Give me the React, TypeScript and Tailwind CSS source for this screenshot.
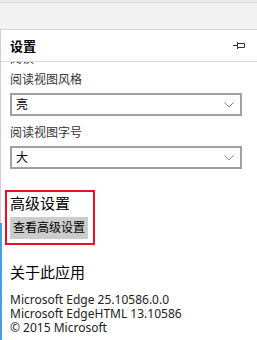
import React from "react";

const font = { fontFamily: '"Noto Sans", "Noto Sans CJK SC", sans-serif' };

function Chevron() {
  return (
    <svg width="10" height="6" viewBox="0 0 10 6" className="text-[#8a8a8a]">
      <path d="M0.5 0.5 L5 5 L9.5 0.5" fill="none" stroke="currentColor" strokeWidth="1" />
    </svg>
  );
}

function PinIcon() {
  return (
    <svg width="13" height="9" viewBox="0 0 13 9" className="text-[#333]">
      <path d="M0 4.5 H4.5 M4.5 1 V8 M4.5 2.5 H11.5 V6.5 H4.5" fill="none" stroke="currentColor" strokeWidth="1" />
    </svg>
  );
}

function Select({ value }: { value: string }) {
  return (
    <div className="mr-[15px] flex h-[23px] items-center justify-between border-2 border-[#a0a0a0] bg-white pl-[4px] pr-[6px]">
      <span className="text-[12px] leading-[16px] text-black">{value}</span>
      <Chevron />
    </div>
  );
}

export default function App() {
  return (
    <div className="relative h-[340px] w-[257px] overflow-hidden bg-white" style={font}>
      <div className="h-[3px] border-b border-[#dcdcdc] bg-[#ececec]" />
      <div className="h-[27px] border-b border-[#d6d6d6] bg-[#f2f2f2]" />

      <div className="flex h-[310px] flex-col border-l border-[#cfcfcf]">
        <div className="flex h-[32px] shrink-0 items-center justify-between border-b border-[#d9d9d9] pl-[9px] pr-[11px]">
          <span className="text-[13px] font-bold leading-[16px] text-black">设置</span>
          <PinIcon />
        </div>

        <div className="flex-1 overflow-hidden pl-[9px]">
          <div className="h-[5px] overflow-hidden">
            <div className="-mt-[11px] text-[12px] leading-[16px] text-[#333]">阅读</div>
          </div>

          <div className="mt-[5px] text-[12px] leading-[16px] text-[#333]">阅读视图风格</div>
          <div className="mt-[5px]">
            <Select value="亮" />
          </div>

          <div className="mt-[9px] text-[12px] leading-[16px] text-[#333]">阅读视图字号</div>
          <div className="mt-[5px]">
            <Select value="大" />
          </div>

          <div className="-ml-[5px] mt-[21px] w-[90px] border-2 border-[#e81123] pb-[4px] pl-[3px] pt-[1px]">
            <div className="text-[15px] leading-[20px] text-black">高级设置</div>
            <div className="mt-[4px] flex h-[22px] w-[78px] items-center justify-center bg-[#cccccc] text-[12px] text-black">
              查看高级设置
            </div>
          </div>

          <div className="mt-[17px] text-[15px] leading-[20px] text-black">关于此应用</div>
          <div className="mt-[11px] text-[12px] leading-[14px] text-[#222]">
            <div>Microsoft Edge 25.10586.0.0</div>
            <div>Microsoft EdgeHTML 13.10586</div>
            <div>© 2015 Microsoft</div>
          </div>
        </div>
      </div>

      <div className="absolute bottom-0 left-0 top-[223px] w-[2px] bg-[#4a9be0]" />
    </div>
  );
}
